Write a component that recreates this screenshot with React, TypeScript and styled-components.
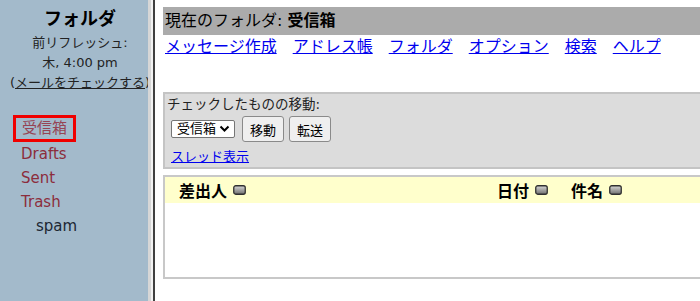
import React from "react";
import styled, { createGlobalStyle } from "styled-components";

const GlobalStyle = createGlobalStyle`
  html, body { margin: 0; padding: 0; height: 301px; overflow: hidden; background: #fff; }
  body { font-family: "DejaVu Sans", "Noto Sans CJK JP", sans-serif; }
  #root { height: 301px; }
`;

const Frameset = styled.div`
  display: flex;
  width: 700px;
  height: 301px;
  overflow: hidden;
`;

const LeftFrame = styled.nav`
  width: 148px;
  flex: none;
  background: #a3bacb;
  overflow: hidden;
`;

const FolderHeader = styled.div`
  width: 160px;
  text-align: center;
  padding-top: 8px;
  white-space: nowrap;
`;

const Title = styled.div`
  font-weight: bold;
  font-size: 18px;
  line-height: 22px;
  color: #000;
  margin-bottom: 3px;
`;

const Meta = styled.div`
  font-size: 13px;
  line-height: 20px;
  color: #222;
`;

const CheckLink = styled.a`
  color: #222;
  text-decoration: underline;
`;

const FolderList = styled.ul`
  list-style: none;
  margin: 22px 0 0;
  padding: 0 0 0 13px;
`;

const FolderItem = styled.li<{ $indent?: number }>`
  font-size: 15px;
  line-height: 24px;
  padding-left: ${(p) => 8 + (p.$indent ?? 0)}px;
  white-space: nowrap;
`;

const CurrentItem = styled.li`
  font-size: 15px;
`;

const FolderLink = styled.a<{ $plain?: boolean }>`
  color: ${(p) => (p.$plain ? "#1c2733" : "#8c2d3c")};
  text-decoration: none;
`;

const CurrentBox = styled.span`
  display: inline-block;
  border: 3px solid #f00000;
  padding: 0 6px;
  line-height: 21px;
  color: #964454;
`;

const Splitter = styled.div`
  flex: none;
  width: 2px;
  background: #f2f2f2;
  border-left: 3px solid #d6d6d6;
  border-right: 2px solid #404040;
`;

const RightFrame = styled.main`
  flex: 1;
  overflow: hidden;
  padding: 7px 0 0 8px;
  background: #fff;
`;

const Content = styled.div`
  width: 600px;
`;

const TitleBar = styled.div`
  background: #ababab;
  height: 28px;
  line-height: 28px;
  padding-left: 2px;
  font-size: 16px;
  color: #000;
`;

const NavRow = styled.div`
  display: flex;
  gap: 16px;
  height: 24px;
  line-height: 24px;
  padding-left: 2px;
  font-size: 16px;
`;

const NavLink = styled.a`
  color: #0000ee;
  text-decoration: underline;
`;

const MoveBox = styled.div`
  margin-top: 33px;
  background: #dcdcdc;
  border: 2px solid #c4c4c4;
  border-right: none;
  padding: 0 0 0 2px;
  font-size: 13.5px;
  color: #222;
`;

const MoveLabel = styled.div`
  line-height: 20px;
`;

const Controls = styled.div`
  display: flex;
  align-items: center;
  margin: 2px 0 0 4px;
  height: 26px;
`;

const SelectWrap = styled.span`
  position: relative;
  display: inline-block;
  margin-right: 7px;
`;

const Select = styled.select`
  appearance: none;
  width: 64px;
  height: 18px;
  border: 1px solid #767676;
  border-radius: 2px;
  background: #fff;
  font: 13px "DejaVu Sans", "Noto Sans CJK JP", sans-serif;
  color: #000;
  padding: 0 0 0 5px;
  line-height: 16px;
`;

const Chevron = styled.svg`
  position: absolute;
  right: 5px;
  top: 5px;
  pointer-events: none;
`;

const Button = styled.button`
  height: 26px;
  padding: 0 7px;
  margin-right: 5px;
  background: #efefef;
  border: 1px solid #8a8a8a;
  border-radius: 3px;
  font: 13px "DejaVu Sans", "Noto Sans CJK JP", sans-serif;
  color: #000;
`;

const ThreadLink = styled.a`
  display: block;
  margin: 5px 0 0 4px;
  line-height: 20px;
  font-size: 13px;
  color: #0000ee;
  text-decoration: underline;
`;

const MessageTable = styled.div`
  margin-top: 6px;
  border: 2px solid #c8c8c8;
  border-right: none;
  height: 100px;
`;

const HeaderRow = styled.div`
  display: grid;
  grid-template-columns: 318px 74px 1fr;
  height: 26px;
  background: #ffffcc;
`;

const HeaderCell = styled.div`
  display: flex;
  align-items: center;
  gap: 6px;
  padding-left: 14px;
  font-size: 16px;
  font-weight: bold;
  color: #000;
`;

const SortIcon = () => (
  <svg width="13" height="10" viewBox="0 0 13 10">
    <defs>
      <linearGradient id="sg" x1="0" y1="0" x2="0" y2="1">
        <stop offset="0" stopColor="#d8d8d8" />
        <stop offset="1" stopColor="#6e6e6e" />
      </linearGradient>
    </defs>
    <rect x="0.75" y="0.75" width="11.5" height="8.5" rx="2" fill="url(#sg)" stroke="#303030" strokeWidth="1.3" />
  </svg>
);

export default function App() {
  return (
    <>
      <GlobalStyle />
      <Frameset>
        <LeftFrame>
          <FolderHeader>
            <Title>フォルダ</Title>
            <Meta>前リフレッシュ:</Meta>
            <Meta>木, 4:00 pm</Meta>
            <Meta>
              (<CheckLink href="#">メールをチェックする</CheckLink>)
            </Meta>
          </FolderHeader>
          <FolderList>
            <CurrentItem>
              <CurrentBox>受信箱</CurrentBox>
            </CurrentItem>
            <FolderItem>
              <FolderLink href="#">Drafts</FolderLink>
            </FolderItem>
            <FolderItem>
              <FolderLink href="#">Sent</FolderLink>
            </FolderItem>
            <FolderItem>
              <FolderLink href="#">Trash</FolderLink>
            </FolderItem>
            <FolderItem $indent={15}>
              <FolderLink href="#" $plain>spam</FolderLink>
            </FolderItem>
          </FolderList>
        </LeftFrame>
        <Splitter />
        <RightFrame>
          <Content>
            <TitleBar>
              現在のフォルダ: <b>受信箱</b>
            </TitleBar>
            <NavRow>
              <NavLink href="#">メッセージ作成</NavLink>
              <NavLink href="#">アドレス帳</NavLink>
              <NavLink href="#">フォルダ</NavLink>
              <NavLink href="#">オプション</NavLink>
              <NavLink href="#">検索</NavLink>
              <NavLink href="#">ヘルプ</NavLink>
            </NavRow>
            <MoveBox>
              <MoveLabel>チェックしたものの移動:</MoveLabel>
              <Controls>
                <SelectWrap>
                  <Select defaultValue="inbox">
                    <option value="inbox">受信箱</option>
                  </Select>
                  <Chevron width="11" height="8" viewBox="0 0 11 8">
                    <path d="M1.5 1.5 L5.5 5.5 L9.5 1.5" fill="none" stroke="#000" strokeWidth="2" />
                  </Chevron>
                </SelectWrap>
                <Button>移動</Button>
                <Button>転送</Button>
              </Controls>
              <ThreadLink href="#">スレッド表示</ThreadLink>
            </MoveBox>
            <MessageTable>
              <HeaderRow>
                <HeaderCell>
                  差出人 <SortIcon />
                </HeaderCell>
                <HeaderCell>
                  日付 <SortIcon />
                </HeaderCell>
                <HeaderCell>
                  件名 <SortIcon />
                </HeaderCell>
              </HeaderRow>
            </MessageTable>
          </Content>
        </RightFrame>
      </Frameset>
    </>
  );
}
